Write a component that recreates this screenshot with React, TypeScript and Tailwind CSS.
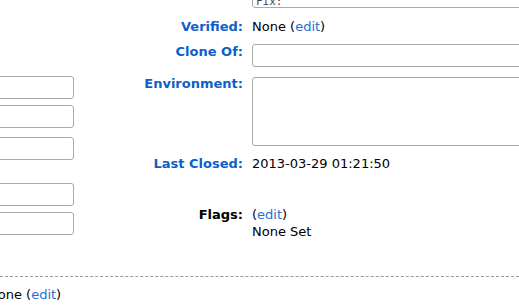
import React from 'react';

const Field: React.FC<{ className?: string }> = ({ className = '' }) => (
  <div className={`border border-[#aaa] rounded-[3px] bg-white ${className}`} />
);

const Edit = () => <span>(<a className="text-[#1f6fd0]">edit</a>)</span>;

const App: React.FC = () => {
  return (
    <div className="w-[519px] h-[305px] overflow-hidden bg-white text-black text-[13px] leading-[17px] font-['DejaVu_Sans',sans-serif]">
      <div className="flex">
        {/* left column of inputs */}
        <div className="w-[74px] shrink-0 flex flex-col pt-[76px]">
          <Field className="w-[90px] h-[23px] -ml-[16px]" />
          <Field className="w-[90px] h-[23px] -ml-[16px] mt-[6px]" />
          <Field className="w-[90px] h-[23px] -ml-[16px] mt-[9px]" />
          <Field className="w-[90px] h-[23px] -ml-[16px] mt-[23px]" />
          <Field className="w-[90px] h-[23px] -ml-[16px] mt-[6px]" />
        </div>

        {/* right column */}
        <div className="flex-1 flex flex-col">
          <div className="flex">
            <div className="w-[169px] shrink-0" />
            <div className="ml-[9px] w-[280px] h-[23px] -mt-[15px] border border-[#aaa] rounded-[3px] px-[3px] pt-[10px] text-[#444] font-['DejaVu_Sans_Mono',monospace] text-[11px] leading-[11px]">
              Fix:
            </div>
          </div>

          <div className="flex mt-[10px]">
            <div className="w-[169px] shrink-0 text-right font-bold text-[#0d5fca]">Verified:</div>
            <div className="ml-[9px] whitespace-nowrap">None <Edit /></div>
          </div>

          <div className="flex mt-[9px] items-start">
            <div className="w-[169px] shrink-0 text-right font-bold text-[#0d5fca] -mt-[1px]">Clone Of:</div>
            <Field className="ml-[9px] w-[280px] h-[23px] shrink-0" />
          </div>

          <div className="flex mt-[10px] items-start">
            <div className="w-[169px] shrink-0 text-right font-bold text-[#0d5fca] -mt-[2px]">Environment:</div>
            <Field className="ml-[9px] w-[280px] h-[69px] shrink-0" />
          </div>

          <div className="flex mt-[9px]">
            <div className="w-[169px] shrink-0 text-right font-bold text-[#0d5fca]">Last Closed:</div>
            <div className="ml-[9px] whitespace-nowrap">2013-03-29 01:21:50</div>
          </div>

          <div className="flex mt-[34px]">
            <div className="w-[169px] shrink-0 text-right font-bold">Flags:</div>
            <div className="ml-[9px] flex flex-col whitespace-nowrap">
              <Edit />
              <span>None Set</span>
            </div>
          </div>
        </div>
      </div>

      <div className="mt-[36px] border-t border-dashed border-[#999]" />

      <div className="mt-[9px] -ml-[12px] whitespace-nowrap">
        None <Edit />
      </div>
    </div>
  );
};

export default App;
